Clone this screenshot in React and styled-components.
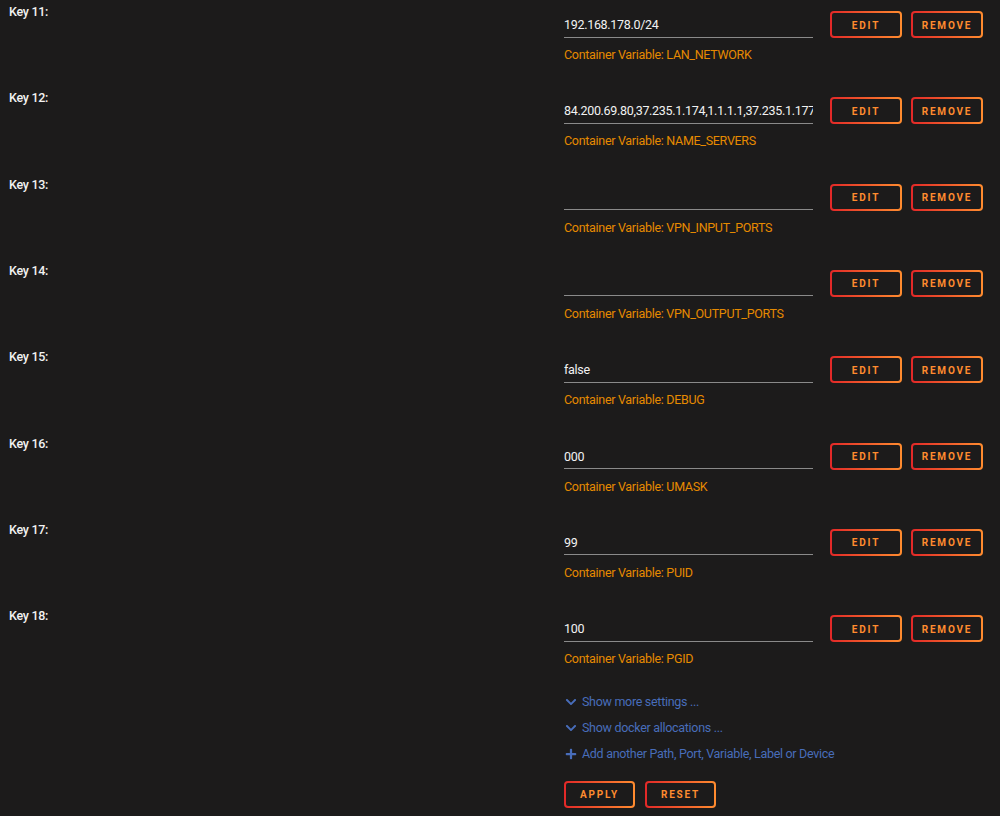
import styled, { createGlobalStyle } from "styled-components";
import { FaChevronDown, FaPlus } from "react-icons/fa";

const GlobalStyle = createGlobalStyle`
    body {
        margin: 0;
        background: #1c1b1b;
        color: #f2f2f2;
        font-family: Roboto, "Noto Sans", sans-serif;
        font-size: 12.5px;
        letter-spacing: -0.3px;
    }
`;

const Page = styled.div`
    width: 1000px;
    min-height: 816px;
    background: #1c1b1b;
`;

const Row = styled.div`
    display: flex;
    align-items: flex-start;
    height: 86.33px;
`;

const Label = styled.div`
    flex: 0 0 555px;
    padding: 4px 0 0 9px;
    line-height: 16px;
    font-weight: 500;
`;

const Field = styled.div`
    display: flex;
    flex-direction: column;
    padding-top: 11px;
`;

const Controls = styled.div`
    display: flex;
    align-items: center;
    gap: 9px;
`;

const Input = styled.input`
    width: 249px;
    height: 26px;
    box-sizing: border-box;
    margin: 0 8px 0 0;
    padding: 1px 0 0;
    border: none;
    border-bottom: 1px solid #8a8a8a;
    background: transparent;
    color: #f2f2f2;
    font-family: Roboto, "Noto Sans", sans-serif;
    font-size: 12.5px;
    letter-spacing: -0.3px;
    outline: none;
`;

const Button = styled.button`
    height: 27px;
    width: ${(p) => p.$width || 72}px;
    box-sizing: border-box;
    border: 2px solid transparent;
    border-radius: 4px;
    background: linear-gradient(#1c1b1b, #1c1b1b) padding-box,
        linear-gradient(90deg, #e22828, #ff8c2f) border-box;
    color: #ff8c2f;
    font-family: Roboto, "Noto Sans", sans-serif;
    font-size: 10px;
    font-weight: 700;
    letter-spacing: 1.8px;
    text-transform: uppercase;
    padding: 1px 0 0;
    cursor: pointer;
`;

const Hint = styled.div`
    margin-top: 9px;
    line-height: 16px;
    color: #e68a00;
`;

const Footer = styled.div`
    padding: 1px 0 0 564px;
    margin-top: -3px;
`;

const LinkLine = styled.div`
    display: flex;
    align-items: center;
    gap: 5px;
    height: 26px;
    color: #486dba;
    svg {
        width: 12px;
        height: 12px;
        margin-left: 1px;
    }
`;

const Actions = styled.div`
    display: flex;
    gap: 10px;
    margin-top: 14px;
`;

const vars = [
    ["Key 11:", "192.168.178.0/24", "LAN_NETWORK"],
    ["Key 12:", "84.200.69.80,37.235.1.174,1.1.1.1,37.235.1.177,1.0.0.1", "NAME_SERVERS"],
    ["Key 13:", "", "VPN_INPUT_PORTS"],
    ["Key 14:", "", "VPN_OUTPUT_PORTS"],
    ["Key 15:", "false", "DEBUG"],
    ["Key 16:", "000", "UMASK"],
    ["Key 17:", "99", "PUID"],
    ["Key 18:", "100", "PGID"],
];

function App() {
    return (
        <Page>
            <GlobalStyle />
            {vars.map(([key, value, name]) => (
                <Row key={key}>
                    <Label>{key}</Label>
                    <Field>
                        <Controls>
                            <Input type="text" value={value} readOnly />
                            <Button>Edit</Button>
                            <Button>Remove</Button>
                        </Controls>
                        <Hint>Container Variable: {name}</Hint>
                    </Field>
                </Row>
            ))}
            <Footer>
                <LinkLine>
                    <FaChevronDown />
                    Show more settings ...
                </LinkLine>
                <LinkLine>
                    <FaChevronDown />
                    Show docker allocations ...
                </LinkLine>
                <LinkLine>
                    <FaPlus />
                    Add another Path, Port, Variable, Label or Device
                </LinkLine>
                <Actions>
                    <Button $width={71}>Apply</Button>
                    <Button $width={71}>Reset</Button>
                </Actions>
            </Footer>
        </Page>
    );
}

export default App;
